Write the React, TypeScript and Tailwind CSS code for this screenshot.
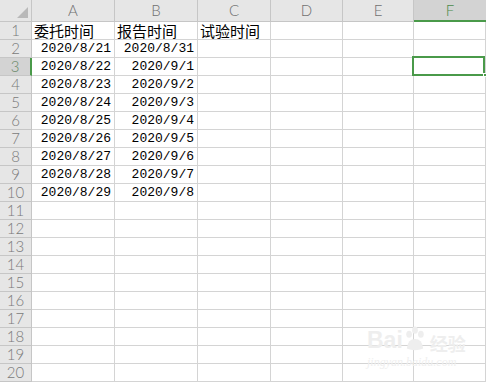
import React from 'react'

const cols = ['A', 'B', 'C', 'D', 'E', 'F']

const data: Record<number, string[]> = {
  2: ['2020/8/21', '2020/8/31'],
  3: ['2020/8/22', '2020/9/1'],
  4: ['2020/8/23', '2020/9/2'],
  5: ['2020/8/24', '2020/9/3'],
  6: ['2020/8/25', '2020/9/4'],
  7: ['2020/8/26', '2020/9/5'],
  8: ['2020/8/27', '2020/9/6'],
  9: ['2020/8/28', '2020/9/7'],
  10: ['2020/8/29', '2020/9/8'],
}

const titles = ['委托时间', '报告时间', '试验时间']

const cjkFont = { fontFamily: '"Noto Sans CJK SC", "Noto Sans", sans-serif' }
const labelFont = { fontFamily: 'Lato, "Liberation Sans", sans-serif' }

export default function App() {
  const rows = Array.from({ length: 20 }, (_, i) => i + 1)

  return (
    <div className="relative w-[486px] h-[382px] overflow-hidden bg-white">
      <div className="grid grid-cols-[32px_83px_83px_73px_72px_71px_1fr] grid-rows-[22px_repeat(20,18px)]">
        {/* corner */}
        <div className="relative bg-[#e6e6e6] border-r border-b border-[#c6c6c6]">
          <div className="absolute right-[3px] bottom-[3px] w-0 h-0 border-l-[11px] border-l-transparent border-b-[11px] border-b-[#b9b9b9]" />
        </div>
        {cols.map((c) => (
          <div
            key={c}
            style={labelFont}
            className={
              c === 'F'
                ? 'flex items-center justify-center bg-[#d3d3d3] border-b-2 border-b-[#4a9a4a] text-[15px] font-light text-[#4a8a4a] leading-none'
                : 'flex items-center justify-center bg-[#e6e6e6] border-r border-b border-[#c6c6c6] text-[15px] font-light text-[#707070] leading-none'
            }
          >
            {c}
          </div>
        ))}

        {rows.map((r) => (
          <React.Fragment key={r}>
            <div
              style={labelFont}
              className={
                r === 3
                  ? 'flex items-center justify-center bg-[#d3d3d3] border-r-2 border-r-[#4a9a4a] border-b border-b-[#c6c6c6] text-[15px] font-light text-[#6a8a6a] leading-none'
                  : 'flex items-center justify-center bg-[#e6e6e6] border-r border-b border-[#c6c6c6] text-[15px] font-light text-[#7a7a7a] leading-none'
              }
            >
              {r}
            </div>
            {cols.map((c, ci) => {
              let content: React.ReactNode = null
              if (r === 1 && ci < 3) {
                content = (
                  <span style={cjkFont} className="pl-[2px] text-[15px] text-black leading-none">
                    {titles[ci]}
                  </span>
                )
              } else if (data[r] && ci < 2) {
                content = (
                  <span
                    style={{ fontFamily: '"Liberation Mono", "DejaVu Sans Mono", monospace' }}
                    className="ml-auto pr-[3px] text-[13px] text-black leading-none"
                  >
                    {data[r][ci]}
                  </span>
                )
              }
              return (
                <div key={c} className="flex items-center border-r border-b border-[#d4d4d4] overflow-visible whitespace-nowrap">
                  {content}
                </div>
              )
            })}
          </React.Fragment>
        ))}
      </div>

      {/* selected cell F3 */}
      <div className="absolute left-[412px] top-[56px] w-[73px] h-[20px] border-2 border-[#4a9a4a]" />
      <div className="absolute left-[483px] top-[73px] w-[4px] h-[4px] bg-[#4a9a4a] border border-white" />

      {/* watermark */}
      <div className="absolute left-[367px] top-[326px] select-none pointer-events-none">
        <div className="flex items-end">
          <span style={{ fontFamily: '"Liberation Sans", sans-serif' }} className="text-[23px] font-bold text-[#eeeeee] leading-none">
            Bai
          </span>
          <span className="relative w-[24px] h-[26px]">
            <svg viewBox="0 0 20 22" className="absolute inset-0 w-[24px] h-[26px]">
              <ellipse cx="5" cy="7" rx="2.4" ry="3" fill="#eeeeee" />
              <ellipse cx="10" cy="3.5" rx="2.4" ry="3" fill="#eeeeee" />
              <ellipse cx="15" cy="7" rx="2.4" ry="3" fill="#eeeeee" />
              <path d="M3 19 Q4 11 10 11 Q16 11 17 19 Q10 22 3 19Z" fill="#eeeeee" />
            </svg>
          </span>
          <span style={cjkFont} className="ml-[3px] text-[18px] font-bold text-[#eeeeee] leading-none">
            经验
          </span>
        </div>
        <div style={{ fontFamily: '"Liberation Serif", serif' }} className="mt-[4px] text-[12px] italic text-[#efefef] leading-none">
          jingyan.baidu.com
        </div>
      </div>
    </div>
  )
}
